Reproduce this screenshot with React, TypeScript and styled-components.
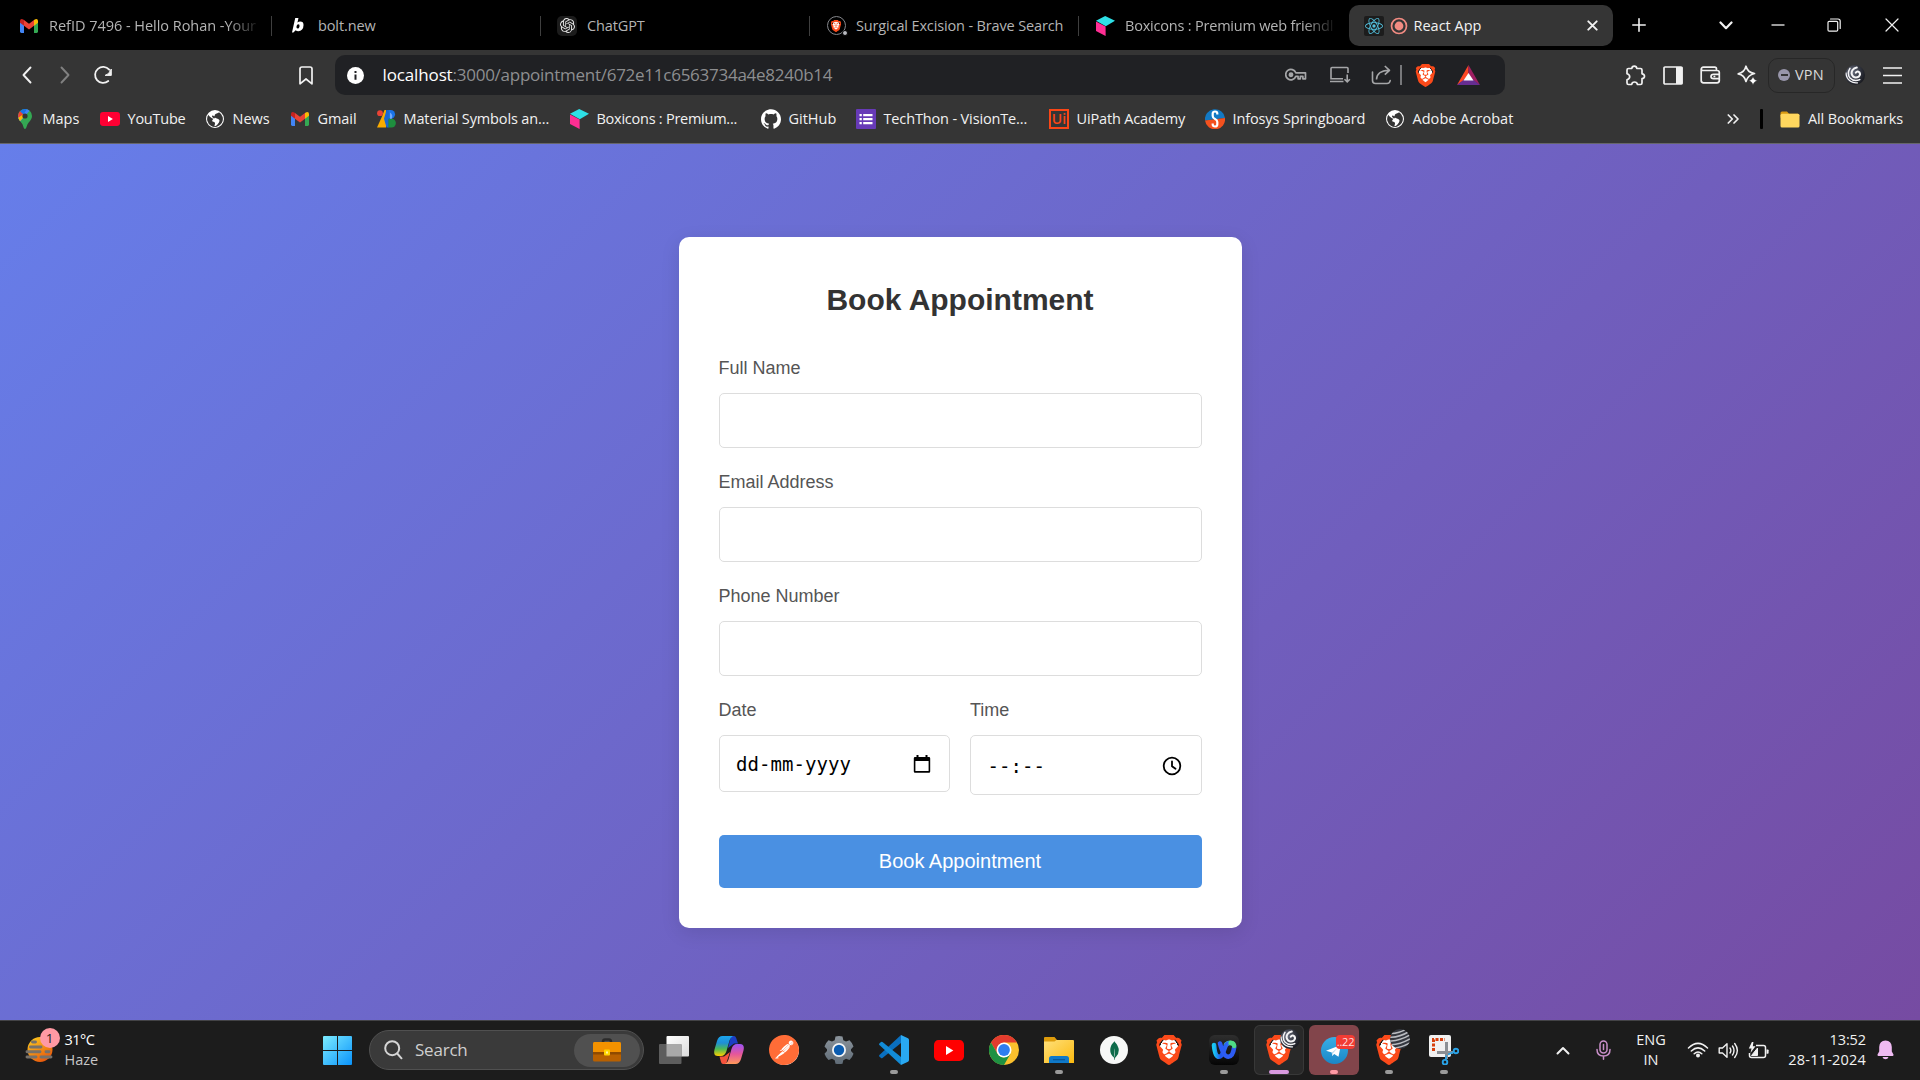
import React from "react";
import styled, { createGlobalStyle, css } from "styled-components";
import {
  SiBrave,
  SiPostman,
  SiOpenai,
  SiReact,
  SiGithub,
  SiMongodb,
} from "react-icons/si";
import { BsGlobeAmericas } from "react-icons/bs";

const ui = `"Open Sans", "Noto Sans", sans-serif`;
const arial = `"Liberation Sans", Arial, sans-serif`;

const GlobalStyle = createGlobalStyle`
  * { box-sizing: border-box; }
  html, body { margin: 0; padding: 0; background: #000; }
  body { width: 1920px; height: 1080px; overflow: hidden; font-family: ${ui}; }
  svg { display: block; flex: none; }
`;

/* ---------- shared ---------- */

const Desktop = styled.div`
  display: flex;
  flex-direction: column;
  width: 1920px;
  height: 1080px;
  overflow: hidden;
`;

const Text = styled.span<{ $ls?: number; $size?: number; $color?: string }>`
  font-family: ${ui};
  font-size: ${(p) => p.$size ?? 14.5}px;
  letter-spacing: ${(p) => p.$ls ?? 0}px;
  color: ${(p) => p.$color ?? "#f1f1f1"};
  line-height: 20px;
  white-space: nowrap;
`;

const Slot = styled.div<{ $w: number }>`
  display: flex;
  align-items: center;
  justify-content: center;
  flex: none;
  width: ${(p) => p.$w}px;
  height: 100%;
`;

const Spacer = styled.div<{ $w?: number }>`
  flex: ${(p) => (p.$w ? "none" : "1")};
  width: ${(p) => (p.$w ? `${p.$w}px` : "auto")};
`;

/* ---------- tab strip ---------- */

const TabStrip = styled.div`
  display: flex;
  align-items: center;
  flex: none;
  height: 50px;
  padding-left: 3px;
  background: #000;
`;

const Tab = styled.div`
  display: flex;
  align-items: center;
  flex: none;
  width: 269px;
  height: 50px;
  padding: 1px 0 0 16px;
`;

const ActiveTab = styled.div`
  display: flex;
  align-items: center;
  flex: none;
  width: 264px;
  height: 41px;
  margin: 1px 0 0 1px;
  padding: 0 15.5px 0 14.5px;
  border-radius: 10px;
  background: #353535;
`;

const ActiveLabel = styled.div`
  padding-bottom: 1.5px;
`;

const TabIcon = styled.div`
  display: flex;
  align-items: center;
  justify-content: center;
  flex: none;
  width: 20px;
  height: 20px;
`;

const TabLabel = styled.div<{ $fade?: boolean }>`
  flex: none;
  width: 209px;
  margin-left: 10px;
  padding-bottom: 2px;
  ${(p) =>
    p.$fade &&
    css`
      mask-image: linear-gradient(to right, #000 178px, transparent 212px);
    `}
`;

const TabDivider = styled.div`
  width: 1px;
  height: 20px;
  margin-left: auto;
  background: #3f3f3f;
`;

const DarkBadge = styled.div<{ $r: number }>`
  display: flex;
  align-items: center;
  justify-content: center;
  width: 20px;
  height: 20px;
  border-radius: ${(p) => p.$r}px;
  background: #1c1c1c;
`;

const SearchFavicon = styled.div`
  display: flex;
  align-items: center;
  justify-content: center;
  position: relative;
  width: 19px;
  height: 19px;
  border: 1.5px solid #85878c;
  border-radius: 50%;

  &::after {
    content: "";
    position: absolute;
    right: -3px;
    bottom: -2px;
    width: 4px;
    height: 4px;
    border: 1px solid #000;
    border-radius: 50%;
    box-sizing: content-box;
    background: #b9bac0;
  }
`;

/* ---------- toolbar ---------- */

const Toolbar = styled.div`
  display: flex;
  align-items: center;
  flex: none;
  height: 50px;
  padding: 0 10px 0 8px;
  background: #353535;
`;

const UrlBar = styled.div`
  display: flex;
  align-items: center;
  flex: none;
  width: 1170px;
  height: 40px;
  margin-left: 9px;
  padding: 0 15px 0 11.5px;
  border-radius: 10px;
  background: #202124;
`;

const UrlText = styled.div`
  display: flex;
  margin-left: 19px;
  padding-bottom: 1px;
`;

const UrlDivider = styled.div`
  width: 2px;
  height: 20px;
  margin: 0 1px 0 -1px;
  background: #77787b;
`;

const VpnButton = styled.div`
  display: flex;
  align-items: center;
  flex: none;
  width: 67px;
  height: 35px;
  padding-left: 9px;
  border: 1px solid #272727;
  border-radius: 10px;
  gap: 5px;
`;

const VpnDot = styled.div`
  display: flex;
  align-items: center;
  justify-content: center;
  width: 12px;
  height: 12px;
  border-radius: 50%;
  background: #9896aa;

  &::before {
    content: "";
    width: 7px;
    height: 1.6px;
    background: #353535;
  }
`;

/* ---------- bookmarks ---------- */

const BookmarksBar = styled.div`
  display: flex;
  align-items: center;
  flex: none;
  height: 44px;
  padding: 0 17px 5px 15px;
  border-bottom: 1px solid #66666a;
  background: #353535;
`;

const Bookmark = styled.div<{ $w?: number }>`
  display: flex;
  align-items: center;
  flex: none;
  gap: 7.5px;
  width: ${(p) => (p.$w ? `${p.$w}px` : "auto")};
`;

const BookmarkIcon = styled.div`
  display: flex;
  align-items: center;
  justify-content: center;
  flex: none;
  width: 20px;
  height: 20px;
`;

const BarDivider = styled.div`
  width: 3px;
  height: 20px;
  margin: 0 17px 0 20px;
  border-radius: 1px;
  background: #000;
`;

/* ---------- page ---------- */

const Page = styled.main`
  display: flex;
  align-items: center;
  justify-content: center;
  flex: 1;
  min-height: 0;
  padding-top: 1px;
  background: linear-gradient(135deg, #667eea 0%, #764ba2 100%);
`;

const Card = styled.form`
  display: flex;
  flex-direction: column;
  width: 563px;
  height: 691px;
  padding: 46px 40px 40px;
  border-radius: 10px;
  background: #fff;
  box-shadow: 0 5px 19px rgba(0, 0, 0, 0.1);
`;

const Title = styled.h2`
  flex: none;
  margin: 0 0 41px;
  color: #333;
  font: bold 30px/34px ${arial};
  text-align: center;
`;

const Field = styled.div`
  display: flex;
  flex: none;
  flex-direction: column;
  margin-bottom: 24px;
`;

const FieldRow = styled.div`
  display: grid;
  grid-template-columns: 1fr 1fr;
  align-items: start;
  gap: 20px;
  margin-bottom: 16px;
`;

const Label = styled.label`
  margin-bottom: 15px;
  color: #555;
  font: 18px/20px ${arial};
`;

const Input = styled.input`
  width: 100%;
  height: 55px;
  padding: 0 16px;
  border: 1px solid #ddd;
  border-radius: 5px;
  outline: none;
  background: #fff;
  font: 20px ${arial};
`;

const PickerBox = styled.div<{ $h: number }>`
  display: flex;
  align-items: center;
  justify-content: space-between;
  height: ${(p) => p.$h}px;
  padding: 1px 18.5px 0 16.5px;
  border: 1px solid #ddd;
  border-radius: 5px;
  color: #000;
  font: 19px/24px "DejaVu Sans Mono", monospace;
  letter-spacing: 0.05px;
`;

const Submit = styled.button`
  flex: none;
  width: 100%;
  height: 53px;
  padding: 0;
  border: 0;
  border-radius: 5px;
  background: #4a90e2;
  color: #fff;
  font: 20px ${arial};
`;

/* ---------- taskbar ---------- */

const Taskbar = styled.footer`
  display: flex;
  align-items: center;
  flex: none;
  height: 60px;
  padding-bottom: 1px;
  border-top: 1px solid #434346;
  background: #1c1c1c;
`;

const Weather = styled.div`
  display: flex;
  align-items: center;
  flex: none;
  width: 323px;
  padding-left: 24.5px;
`;

const WeatherIcon = styled.div`
  position: relative;
  width: 40px;
  height: 44px;
  padding-top: 9px;
`;

const WeatherBadge = styled.span`
  position: absolute;
  top: 0;
  left: 15px;
  width: 20px;
  height: 20px;
  border-radius: 50%;
  background: #ff99a4;
  color: #1c1c1c;
  font: 13.5px/20px ${ui};
  text-align: center;
`;

const Stack = styled.div<{ $align?: string }>`
  display: flex;
  flex-direction: column;
  align-items: ${(p) => p.$align ?? "flex-start"};
  padding-bottom: 1px;
`;

const SearchPill = styled.div`
  display: flex;
  align-items: center;
  justify-content: space-between;
  flex: none;
  width: 275px;
  height: 40px;
  margin: 0 5px 0 17px;
  padding: 0 3px 0 14px;
  border: 1px solid #505050;
  border-radius: 20px;
  background: #3a3a3a;
`;

const SearchPrompt = styled.div`
  display: flex;
  align-items: center;
  gap: 12px;
`;

const SearchHighlight = styled.div`
  display: flex;
  align-items: center;
  justify-content: center;
  width: 66px;
  height: 33px;
  border-radius: 17px;
  background: #505050;
`;

const Apps = styled.div`
  display: flex;
  gap: 5px;
`;

const AppTile = styled.div<{ $bg?: string; $outline?: boolean }>`
  display: flex;
  flex-direction: column;
  align-items: center;
  flex: none;
  position: relative;
  width: 50px;
  height: 50px;
  padding-top: 10px;
  border-radius: 6px;
  background: ${(p) => p.$bg ?? "transparent"};
  box-shadow: ${(p) => (p.$outline ? "inset 0 0 0 1px #383838" : "none")};
`;

const Indicator = styled.div<{ $w: number; $color: string }>`
  width: ${(p) => p.$w}px;
  height: 4px;
  margin-top: 5px;
  border-radius: 2px;
  background: ${(p) => p.$color};
`;

const ProfileBadge = styled.div`
  position: absolute;
  top: 4px;
  right: 4px;
`;

const CountBadge = styled.span`
  position: absolute;
  top: 10px;
  right: 4px;
  width: 19px;
  height: 14px;
  border-radius: 4px;
  background: #f23c34;
  color: #ffdede;
  font: 11px/14px ${ui};
  letter-spacing: -0.2px;
  text-align: center;
`;

const Lion = styled.div<{ $h: number }>`
  display: grid;
  place-items: center;
  flex: none;
  width: ${(p) => p.$h}px;
  height: ${(p) => p.$h}px;
  color: #fb4a1a;
  background: radial-gradient(ellipse 31% 38% at 50% 48%, #fff 97%, transparent);
`;

const Disc = styled.div<{ $size: number; $bg: string; $color: string }>`
  display: grid;
  place-items: center;
  place-content: center;
  width: ${(p) => p.$size}px;
  height: ${(p) => p.$size}px;
  border-radius: 50%;
  background: ${(p) => p.$bg};
  color: ${(p) => p.$color};
`;

const AppArt = styled.div`
  display: flex;
  align-items: center;
  justify-content: center;
  width: 30px;
  height: 30px;
`;

const Tray = styled.div`
  display: flex;
  align-items: center;
  height: 100%;
  margin-left: auto;
  padding-right: 16px;
`;

const Clock = styled.div`
  display: flex;
  flex-direction: column;
  align-items: flex-end;
  width: 93px;
  padding-bottom: 1px;
`;

/* ---------- drawings ---------- */

const Gmail = () => (
  <svg width="18" height="14" viewBox="0 0 18 14">
    <path d="M0 2v10.6Q0 14 1.300 14H4V6z" fill="#4285f4" />
    <path d="M18 2v10.600q0 1.400-1.300 1.400H14V6z" fill="#34a853" />
    <path d="M14 1v5.800l4-3V2q0-2-1.700-2-.9 0-1.500.5z" fill="#fbbc04" />
    <path d="M4 1v5.800l-4-3V2Q0 0 1.700 0q.9 0 1.500.5z" fill="#c5221f" />
    <path d="M4 6.800V1l5 3.800L14 1v5.800l-5 3.800z" fill="#ea4335" />
  </svg>
);

const Bolt = () => (
  <svg width="12" height="15" viewBox="0 0 13 16">
    <path
      fillRule="evenodd"
      d="M3.500 0H7L5.900 4.800Q7.300 3.800 8.900 3.800 12.500 3.800 12.500 7.500 12.500 10.500 10.900 12.400 9.300 14.300 6.900 14.300 5 14.300 4 13.100L1.500 15.500H0zM6.700 6.600Q5.400 6.600 4.900 8.700 4.400 11.300 6.200 11.300 7.500 11.300 8.100 9.300 8.700 6.600 6.700 6.600z"
      fill="#fff"
    />
  </svg>
);

const Boxicons = () => (
  <svg width="19" height="20" viewBox="0 0 19 20">
    <path d="M0 4.800 9.200 0 19 4.800 9.800 10.200z" fill="#2ee0e6" />
    <path d="M0 5.400 9.600 10.400V20L0 15z" fill="#ff2e93" />
  </svg>
);

const Record = () => (
  <svg width="18" height="18" viewBox="0 0 18 18">
    <circle cx="9" cy="9" r="7.500" fill="none" stroke="#f28b82" strokeWidth="1.700" />
    <circle cx="9" cy="9" r="4.400" fill="#f28b82" />
  </svg>
);

const Stroke = ({
  w,
  h,
  d,
  sw = 1.7,
  c = "#f1f1f1",
  fill = "none",
  round = true,
}: {
  w: number;
  h: number;
  d: string;
  sw?: number;
  c?: string;
  fill?: string;
  round?: boolean;
}) => (
  <svg
    width={w}
    height={h}
    viewBox={`0 0 ${w} ${h}`}
    fill={fill}
    stroke={c}
    strokeWidth={sw}
    strokeLinecap={round ? "round" : "butt"}
    strokeLinejoin="round"
  >
    <path d={d} />
  </svg>
);

const Reload = () => (
  <svg width="20" height="20" viewBox="0 0 20 20">
    <path d="M15.300 16A8 8 0 1 1 16.200 4.700" fill="none" stroke="#f1f1f1" strokeWidth="1.800" strokeLinecap="round" />
    <path d="M18.300 4v6.400h-6.200q3.800-.6 6.200-6.400z" fill="#f1f1f1" stroke="#f1f1f1" strokeLinejoin="round" />
  </svg>
);

const Info = () => (
  <svg width="17" height="17" viewBox="0 0 17 17">
    <circle cx="8.500" cy="8.500" r="8.500" fill="#fff" />
    <path d="M7.500 7.400h2v5.400h-2zM7.500 4h2v2h-2z" fill="#202124" />
  </svg>
);

const Key = () => (
  <svg width="22" height="14" viewBox="0 0 22 14" fill="none" stroke="#a5a6a8" strokeWidth="1.700">
    <path d="M10.800 4.800H20.500v6h-2.600V8.400h-2.600v2.400h-2.200V8.400H10.800A5.200 5.200 0 1 1 10.800 4.800z" strokeLinejoin="round" />
    <circle cx="6" cy="6.800" r="1.600" fill="#a5a6a8" />
  </svg>
);

const Install = () => (
  <svg width="22" height="18" viewBox="0 0 22 18" fill="none" stroke="#a5a6a8" strokeWidth="1.600">
    <path d="M19 7V2.600Q19 1.500 18 1.500H3Q2 1.500 2 2.600V12.800H14M1 15.500H14.500" />
    <path d="M18.200 8.500V15.800M15.500 13.200l2.700 2.700 2.700-2.700" />
  </svg>
);

const Share = () => (
  <svg width="21" height="20" viewBox="0 0 21 20" fill="none" stroke="#a5a6a8" strokeWidth="1.600" strokeLinejoin="round">
    <path d="M1.500 7V15.500q0 3 3 3H16q2.800 0 3.200-3" strokeLinecap="round" />
    <path d="M5.500 14.500Q5.800 5.800 18 5.300M13.800 1l4.700 4.300-4.700 4.400" />
  </svg>
);

const Triangle = () => (
  <svg width="23" height="20" viewBox="0 0 23 20">
    <path d="M11.500 0 0 20 11.500 12z" fill="#ff4724" />
    <path d="M11.500 0 23 20 11.500 12z" fill="#9e1f63" />
    <path d="M0 20H23L11.500 11z" fill="#662d91" />
    <path d="M11.500 8 16.500 15.500H6.500z" fill="#fff" />
  </svg>
);

const Puzzle = () => (
  <Stroke
    w={21}
    h={21}
    sw={1.7}
    d="M2 5Q2 3.500 3.500 3.500H6.800Q7 1.200 9.300 1.200T11.800 3.500H15.500Q17 3.500 17 5V8.800Q19.500 9 19.500 11.200T17 13.600V18Q17 19.500 15.500 19.500H12.500Q12 17 9.500 17T6.700 19.500H3.500Q2 19.500 2 18V14.800Q4.700 14 4.700 11.800T2 8.800z"
  />
);

const SidePanel = () => (
  <svg width="20" height="19" viewBox="0 0 20 19">
    <rect x="1" y="1" width="18" height="17" rx="1" fill="none" stroke="#f1f1f1" strokeWidth="1.700" />
    <rect x="13" y="1" width="6.500" height="17" fill="#f1f1f1" />
  </svg>
);

const Wallet = () => (
  <Stroke
    w={21}
    h={18}
    sw={1.7}
    d="M16.500 4.500V3Q16.500 1.200 14.700 1.200H3.500Q1.200 1.200 1.200 3.500V14.500Q1.200 16.800 3.500 16.800H17Q19.300 16.800 19.300 14.500V6.500Q19.300 4.500 17 4.500H3Q1.200 4.500 1.200 3M19.300 8.300H13.500Q11 8.300 11 10.500T13.500 12.700H19.300M14.200 10.500H14.600"
  />
);

const Sparkle = () => (
  <svg width="21" height="20" viewBox="0 0 21 20">
    <path
      d="M9 1.200Q10.300 7.200 17.500 8.500 10.800 10 9 16.500 7.500 10 1.200 8.800 7.500 7.200 9 1.200z"
      fill="none"
      stroke="#f1f1f1"
      strokeWidth="1.700"
      strokeLinejoin="round"
    />
    <path d="M16 11.500Q16.800 15 20.500 15.700 16.800 16.500 16 20 15.200 16.500 11.700 15.700 15.200 15 16 11.500z" fill="#fff" stroke="#353535" strokeWidth=".5" />
  </svg>
);

const Swirl = ({ size = 20 }: { size?: number }) => (
  <svg width={size} height={size} viewBox="0 0 20 20">
    <defs>
      <radialGradient id="swirlBall" cx=".35" cy=".35" r=".75">
        <stop offset="0" stopColor="#6b7080" />
        <stop offset=".6" stopColor="#2f323c" />
        <stop offset="1" stopColor="#15161b" />
      </radialGradient>
      <clipPath id="swirlClip">
        <circle cx="10" cy="10" r="10" />
      </clipPath>
    </defs>
    <circle cx="10" cy="10" r="10" fill="url(#swirlBall)" />
    <g fill="none" stroke="#f4f4f6" strokeLinecap="round" clipPath="url(#swirlClip)">
      <path d="M10.800 7.600Q12.400 5.600 14.300 7.200 16 9.400 13.800 11.600 10.600 13.500 8 11.400 5.500 8.600 7.400 5.300 9 3 11.800 2.600" strokeWidth="2" />
      <path d="M5 3.300Q1.600 8.500 5 13 9 17 14.800 14.600" strokeWidth="1.500" />
      <path d="M1 8Q1.300 13.500 5.500 16.300 8.500 18.300 12.500 17.800" strokeWidth="1.300" />
    </g>
  </svg>
);

const Striped = () => (
  <svg width="20" height="20" viewBox="0 0 20 20">
    <defs>
      <clipPath id="ball">
        <circle cx="10" cy="10" r="10" />
      </clipPath>
    </defs>
    <g clipPath="url(#ball)">
      <rect width="20" height="20" fill="#34373f" />
      <path
        d="M0 4.500Q9 5 20-2M0 8.200Q9 8.700 20 2M0 11.900Q9 12.400 20 6M0 15.600Q9 16.100 20 10M0 19.300Q9 19.800 20 14"
        stroke="#b9bbc0"
        strokeWidth="1.500"
        fill="none"
      />
    </g>
  </svg>
);

const MapsPin = () => (
  <svg width="14" height="20" viewBox="0 0 14 20">
    <defs>
      <clipPath id="pin">
        <path d="M7 0a7 7 0 0 1 7 7c0 3.500-2.500 5.200-4.300 8C8.600 17 8.300 20 7 20s-1.600-3-2.700-5C2.500 12.200 0 10.500 0 7a7 7 0 0 1 7-7z" />
      </clipPath>
    </defs>
    <g clipPath="url(#pin)">
      <rect width="14" height="20" fill="#34a853" />
      <path d="M0 15 14-1 10-3 0 6z" fill="#4285f4" />
      <path d="M0 14.500 7.500 6 5 4 0 9z" fill="#fbbc04" />
      <path d="M-1 9.500 5.800 5 2 1-1 4z" fill="#ea4335" />
      <path d="M2 2.200 5.500 5.500 9 0H4z" fill="#1a73e8" />
    </g>
    <circle cx="7" cy="7" r="2.600" fill="#353535" />
  </svg>
);

const YouTube = ({ w, h }: { w: number; h: number }) => (
  <svg width={w} height={h} viewBox="0 0 30 20" preserveAspectRatio="none">
    <rect width="30" height="20" rx="4.500" fill={w > 25 ? "#ff0000" : "#ff0033"} />
    <path d="M12 5.800v8.400l7.300-4.200z" fill="#fff" />
  </svg>
);

const MaterialSymbols = () => (
  <svg width="19" height="18" viewBox="0 0 19 18">
    <path d="M9 0v17.500H0L5 6.500 7.500 0z" fill="#f9ab00" />
    <circle cx="3" cy="3.200" r="2.900" fill="#ea4335" />
    <path d="M9.500 0h4.200a4.300 4.300 0 0 1 0 8.700H9.500z" fill="#1a73e8" />
    <path d="M9.500 0 7 8.700l2.500 8.800h2.300V0z" fill="#1967d2" />
    <path d="M11.500 8.700h3a4.400 4.400 0 0 1 0 8.800h-3z" fill="#1e8e3e" />
    <path d="M13 2.500q3.500 2.500 1.700 6.200H13z" fill="#6ea8ff" />
  </svg>
);

const Forms = () => (
  <svg width="20" height="20" viewBox="0 0 20 20">
    <rect width="20" height="20" rx="1" fill="#673ab7" />
    <path d="M3.500 5h2.300v2.200H3.500zM7.200 5h9.300v2.200H7.200zM3.500 9h2.300v2.200H3.500zM7.200 9h9.300v2.200H7.200zM3.500 13h2.300v2.200H3.500zM7.200 13h9.300v2.200H7.200z" fill="#fff" />
  </svg>
);

const UiPathMark = styled.div`
  width: 20px;
  height: 20px;
  border: 2px solid #fa4616;
  color: #fa4616;
  font: 600 14px/16px ${ui};
  text-align: center;
`;

const Infosys = () => (
  <svg width="20" height="20" viewBox="0 0 20 20">
    <path d="M0 11.500A10 10 0 1 1 20 9z" fill="#1279c4" />
    <path d="M0 11.500A10 10 0 0 0 20 9z" fill="#f4511e" />
    <path d="M12.300 5.500V4.500Q12.300 2.500 10 2.500T7.700 4.500V7Q7.700 9 10 10T12.300 13V15.500Q12.300 17.500 10 17.500T7.700 15.500V14.500" fill="none" stroke="#fff" strokeWidth="2.200" />
  </svg>
);

const Folder = () => (
  <svg width="20" height="17" viewBox="0 0 20 17">
    <path d="M.5 2Q.5.500 2 .5h5l2 2.300H18v4H.5z" fill="#d99a12" />
    <rect x=".5" y="2.700" width="19" height="13.800" rx="1.500" fill="#ffd75e" />
  </svg>
);

const Haze = () => (
  <svg width="29" height="26" viewBox="0 0 29 26">
    <defs>
      <linearGradient id="sun" x2=".6" y2="1">
        <stop offset="0" stopColor="#ffd21f" />
        <stop offset="1" stopColor="#e8590c" />
      </linearGradient>
    </defs>
    <circle cx="15" cy="12.500" r="12.500" fill="url(#sun)" />
    <path d="M7.500 5H10.500M5.500 10H16M2 14.800H15M21 14.800H24M2 20H11M16 20H26" stroke="#77716a" strokeWidth="2.900" strokeLinecap="round" />
  </svg>
);

const WindowsLogo = () => (
  <svg width="29" height="29" viewBox="0 0 29 29">
    <defs>
      <linearGradient id="win" x2="1" y2="1">
        <stop offset="0" stopColor="#7cecff" />
        <stop offset="1" stopColor="#0a93fb" />
      </linearGradient>
    </defs>
    <path d="M1 0H14V14H0V1Q0 0 1 0zM15 0H28Q29 0 29 1V14H15zM0 15H14V29H1Q0 29 0 28zM15 15H29V28Q29 29 28 29H15z" fill="url(#win)" />
  </svg>
);

const Briefcase = () => (
  <svg width="28" height="24" viewBox="0 0 28 24">
    <path d="M10 4Q10 1.500 12 1.500H16Q18 1.500 18 4" stroke="#2b2b2b" strokeWidth="2.600" fill="none" />
    <rect y="4" width="28" height="19.500" rx="1.500" fill="#b86000" />
    <path d="M0 5.500Q0 4 1.500 4H26.500Q28 4 28 5.500V14H0z" fill="#f39200" />
    <path d="M0 14H28V16.500H0z" fill="#8f4a00" />
    <rect x="11" y="11.500" width="6" height="6" rx="1" fill="#ffd400" />
    <rect x="13" y="13.500" width="2" height="2" fill="#fff3a0" />
  </svg>
);

const TaskView = () => (
  <svg width="30" height="28" viewBox="0 0 30 28">
    <defs>
      <linearGradient id="tv" x2="1" y2="1">
        <stop offset="0" stopColor="#fff" />
        <stop offset="1" stopColor="#dcdcdc" />
      </linearGradient>
    </defs>
    <rect x="7.500" y="0" width="22.500" height="20.500" rx="1" fill="url(#tv)" />
    <rect x="0" y="8" width="22.500" height="20" rx="1" fill="#5d5d5d" />
    <path d="M7.500 8H21.500Q22.500 8 22.500 9V20.500H7.500z" fill="#a9a9a9" />
  </svg>
);

const Copilot = () => (
  <svg width="30" height="28" viewBox="0 0 30 28">
    <defs>
      <linearGradient id="cpA" x2="0" y2="1">
        <stop offset="0" stopColor="#1ba6ee" />
        <stop offset=".35" stopColor="#1f8fd6" />
        <stop offset=".65" stopColor="#4dba54" />
        <stop offset="1" stopColor="#ffce00" />
      </linearGradient>
      <linearGradient id="cpB" x2="0" y2="1">
        <stop offset="0" stopColor="#9b52f5" />
        <stop offset=".5" stopColor="#e5569b" />
        <stop offset="1" stopColor="#ff9a5a" />
      </linearGradient>
    </defs>
    <path d="M17 0H20Q21.500 0 22.200 2L24 7.500H20L14 12z" fill="#1b3fc4" />
    <path d="M12 28H9Q7.500 28 7 26L5.500 20.500H10L16 16z" fill="#f5533d" />
    <path d="M8.500 0H19Q16.500 1 15.500 4.500L12.500 15Q11 20 7 20H4Q-1 20 .5 13.500L3 5Q4.500 0 8.500 0z" fill="url(#cpA)" />
    <path d="M21.500 28H11Q13.500 27 14.500 23.500L17.500 13Q19 8 23 8H26Q31 8 29.500 14.500L27 23Q25.500 28 21.500 28z" fill="url(#cpB)" />
  </svg>
);

const Gear = () => (
  <svg width="30" height="30" viewBox="0 0 30 30">
    <defs>
      <linearGradient id="gear" x2="0" y2="1">
        <stop offset="0" stopColor="#8b949c" />
        <stop offset="1" stopColor="#5f6b76" />
      </linearGradient>
    </defs>
    <path
      d="M11.500 1.500Q15 .5 18.500 1.500L19.300 5.200 22 6.500 25.500 5.200Q28.500 8 29.500 11.500L27 14.300V16L29.500 18.700Q28.500 22 25.500 25L22 23.800 19.300 25.200 18.500 28.700Q15 29.500 11.500 28.700L10.700 25.200 8 23.800 4.500 25Q1.500 22 .5 18.700L3 16V14.300L.5 11.500Q1.500 8 4.500 5.200L8 6.500 10.700 5.200z"
      fill="url(#gear)"
    />
    <circle cx="15" cy="15" r="7" fill="#f2f4f6" />
    <circle cx="15" cy="15" r="5.200" fill="#0a5cb0" />
  </svg>
);

const VSCode = () => (
  <svg width="30" height="30" viewBox="0 0 30 30">
    <path d="M22 0 29 3.300Q30 3.800 30 5V25Q30 26.200 29 26.700L22 30z" fill="#29a9f2" />
    <path d="M22 0V8L3.500 23Q2.800 23.500 2 23L.4 21.500Q-.3 20.800.4 20z" fill="#0a6fbf" />
    <path d="M22 30V22L3.500 7Q2.800 6.500 2 7L.4 8.500Q-.3 9.200.4 10z" fill="#128bd6" />
  </svg>
);

const Chrome = () => (
  <svg width="30" height="30" viewBox="0 0 30 30">
    <circle cx="15" cy="15" r="15" fill="#fbc02d" />
    <path d="M2 7.500A15 15 0 0 1 28 7.500H15Q10 8 8.500 18.750z" fill="#e33b2e" />
    <path d="M2 7.500 8.500 18.750Q11 22.500 15 22.500L21.500 18.750 15 30A15 15 0 0 1 2 7.500z" fill="#1e9142" />
    <circle cx="15" cy="15" r="7.500" fill="#fff" />
    <circle cx="15" cy="15" r="5.900" fill="#2f7df0" />
  </svg>
);

const Explorer = () => (
  <svg width="30" height="28" viewBox="0 0 30 28">
    <defs>
      <linearGradient id="fold" x2="1" y2="1">
        <stop offset="0" stopColor="#ffe07a" />
        <stop offset="1" stopColor="#fbb90f" />
      </linearGradient>
    </defs>
    <path d="M0 2Q0 1 1 1H10.500L13 4H28V10H0z" fill="#dd9b0b" />
    <path d="M0 5.500H10.500L12.500 4H29Q30 4 30 5V27H0z" fill="url(#fold)" />
    <path d="M5 27V22.500Q5 20 7.500 20H22.500Q25 20 25 22.500V27z" fill="#0f79c9" />
    <path d="M9 23.700H21" stroke="#0a5596" strokeWidth="1.200" />
  </svg>
);

const Webex = () => (
  <svg width="30" height="30" viewBox="0 0 30 30">
    <defs>
      <linearGradient id="wx" x2="1">
        <stop offset="0" stopColor="#19c7f2" />
        <stop offset=".45" stopColor="#2156f0" />
        <stop offset="1" stopColor="#2f6bf5" />
      </linearGradient>
      <linearGradient id="wxBg" x2="0" y2="1">
        <stop offset="0" stopColor="#2e2e2e" />
        <stop offset="1" stopColor="#050505" />
      </linearGradient>
    </defs>
    <rect width="30" height="30" rx="6" fill="url(#wxBg)" />
    <path d="M17 9.500Q20.500 6.500 24 8.500" fill="none" stroke="#4fdc84" strokeWidth="4.500" strokeLinecap="round" />
    <path
      d="M5 10Q6 21.800 10 21.800 12.800 21.800 15 15 17.200 8.200 19.800 8.200"
      fill="none"
      stroke="url(#wx)"
      strokeWidth="4.600"
      strokeLinecap="round"
    />
    <path
      d="M11 8.500Q14.500 21.800 19.300 21.800 24 21.500 25.200 12"
      fill="none"
      stroke="#2d5cf3"
      strokeWidth="4.600"
      strokeLinecap="round"
    />
    <path d="M21.500 8Q25 8.500 25.200 11" fill="none" stroke="#4fdc84" strokeWidth="4.400" strokeLinecap="round" />
  </svg>
);

const Telegram = () => (
  <svg width="27" height="27" viewBox="0 0 27 27">
    <defs>
      <linearGradient id="tg" x2="0" y2="1">
        <stop offset="0" stopColor="#38aee6" />
        <stop offset="1" stopColor="#1a86c7" />
      </linearGradient>
    </defs>
    <circle cx="13.500" cy="13.500" r="13.500" fill="url(#tg)" />
    <path d="M5 13.800 19.800 8 17.500 19.800 13.200 17 11.200 19 10.800 15.600z" fill="#fff" />
    <path d="M10.800 15.600 17 10.500 12 16.300 11.200 19z" fill="#b9d9ec" />
  </svg>
);

const Snip = () => (
  <svg width="30" height="30" viewBox="0 0 30 30">
    <rect width="22" height="22" rx="2" fill="#f1f1f1" />
    <path d="M4.500 16V4.500H16" fill="none" stroke="#d8400d" strokeWidth="3" strokeDasharray="3 1.500" />
    <path d="M17.500 7V24M8 17.500H24" fill="none" stroke="#8b8f94" strokeWidth="3" />
    <circle cx="27" cy="16" r="2.300" fill="none" stroke="#29a3e8" strokeWidth="1.900" />
    <circle cx="16" cy="27.200" r="2.300" fill="none" stroke="#29a3e8" strokeWidth="1.900" />
    <path d="M19 19.500 25 17M17.300 20.500 16.700 25" stroke="#29a3e8" strokeWidth="1.700" />
  </svg>
);

const Magnifier = () => (
  <svg width="19" height="20" viewBox="0 0 19 20" fill="none" stroke="#d6d6d6" strokeWidth="2" strokeLinecap="round">
    <circle cx="8.200" cy="8.200" r="7" />
    <path d="M13.200 13.500 17.500 18.300" />
  </svg>
);

const Wifi = () => (
  <svg width="22" height="16" viewBox="0 0 22 16" fill="none" stroke="#f1f1f1" strokeWidth="1.500" strokeLinecap="round">
    <path d="M1.500 6Q11-3.300 20.500 6M4.300 9Q11 2.700 17.700 9M7.200 11.800Q11 8.200 14.800 11.800" />
    <circle cx="11" cy="13.600" r="2" fill="#f1f1f1" stroke="none" />
  </svg>
);

const Speaker = () => (
  <Stroke
    w={21}
    h={17}
    sw={1.4}
    d="M1.200 6V11H4.500L9 15.200V1.800L4.500 6zM12 6Q13.700 8.500 12 11M14.500 4Q17.500 8.500 14.500 13M16.700 1.500Q22 8.500 16.700 15.500"
  />
);

const Battery = () => (
  <svg width="21" height="17" viewBox="0 0 21 17">
    <path d="M8 3.500H15.500Q17.500 3.500 17.500 5.500V13.500Q17.500 15.500 15.500 15.500H3.500Q1.500 15.500 1.500 13.500V11" fill="none" stroke="#f1f1f1" strokeWidth="1.500" />
    <path d="M18.500 7.500h1.300q.8 0 .8.800v2.600q0 .8-.8.800H18.500z" fill="#f1f1f1" />
    <path d="M3.500 13.500 9.500 6V13.500z" fill="#f1f1f1" stroke="#f1f1f1" />
    <path d="M4-.2.8 6.500H3.500L2.500 11 7.500 4.300H4.800L5.500-.2z" fill="#f1f1f1" />
  </svg>
);

const Mic = () => (
  <svg width="15" height="20" viewBox="0 0 15 20" fill="none" stroke="#c98fc9" strokeWidth="1.500" strokeLinecap="round">
    <rect x="4" y="1" width="7" height="12" rx="3.500" />
    <path d="M1 9.500Q1 16 7.500 16T14 9.500M7.500 16V19.200M7.500 4.500V9.500" />
  </svg>
);

const Bell = () => (
  <svg width="17" height="20" viewBox="0 0 17 20">
    <path d="M8.500.5Q14.500.8 14.800 7V11.500L16.500 14.500Q16.600 16 15.500 16H1.500Q.4 16 .5 14.500L2.200 11.500V7Q2.500.8 8.500.5z" fill="#efbaf2" />
    <path d="M5.500 17H11.500Q10.800 19.300 8.500 19.300T5.500 17z" fill="#efbaf2" />
  </svg>
);

const BraveLogo = ({ size }: { size: number }) => (
  <Lion $h={size}>
    <SiBrave size={size} />
  </Lion>
);

/* ---------- data ---------- */

const tabs = [
  { label: "RefID 7496 - Hello Rohan -Your", ls: -0.03, fade: true, icon: <Gmail /> },
  { label: "bolt.new", ls: -0.12, icon: <Bolt /> },
  {
    label: "ChatGPT",
    ls: -0.12,
    icon: (
      <DarkBadge $r={5}>
        <SiOpenai size={15} color="#e6e6e6" />
      </DarkBadge>
    ),
  },
  {
    label: "Surgical Excision - Brave Search",
    ls: -0.14,
    icon: (
      <SearchFavicon>
        <BraveLogo size={12} />
      </SearchFavicon>
    ),
  },
  { label: "Boxicons : Premium web friendl", ls: -0.2, fade: true, last: true, icon: <Boxicons /> },
];

const bookmarks = [
  { label: "Maps", w: 85, ls: 0, icon: <MapsPin /> },
  { label: "YouTube", w: 105, ls: -0.23, icon: <YouTube w={20} h={14} /> },
  { label: "News", w: 85, ls: 0, icon: <BsGlobeAmericas size={18} color="#fff" /> },
  { label: "Gmail", w: 86, ls: -0.07, icon: <Gmail /> },
  { label: "Material Symbols an...", w: 193, ls: -0.13, icon: <MaterialSymbols /> },
  { label: "Boxicons : Premium...", w: 192, ls: -0.25, icon: <Boxicons /> },
  { label: "GitHub", w: 95, ls: 0, icon: <SiGithub size={20} color="#fff" /> },
  { label: "TechThon - VisionTe...", w: 193, ls: -0.14, icon: <Forms /> },
  { label: "UiPath Academy", w: 156, ls: -0.15, icon: <UiPathMark>Ui</UiPathMark> },
  { label: "Infosys Springboard", w: 180, ls: -0.12, icon: <Infosys /> },
  { label: "Adobe Acrobat", w: 130, ls: 0.04, icon: <BsGlobeAmericas size={18} color="#fff" /> },
];

type App = {
  name: string;
  art: React.ReactNode;
  badge?: React.ReactNode;
  bg?: string;
  outline?: boolean;
  mark?: { w: number; color: string };
};

const running = { w: 8, color: "#9a9a9a" };

const apps: App[] = [
  { name: "task-view", art: <TaskView /> },
  { name: "copilot", art: <Copilot /> },
  {
    name: "postman",
    art: (
      <Disc $size={29} $bg="#fff" $color="#ff6c37">
        <SiPostman size={30} />
      </Disc>
    ),
  },
  { name: "settings", art: <Gear /> },
  { name: "vscode", art: <VSCode />, mark: running },
  { name: "youtube", art: <YouTube w={30} h={21} /> },
  { name: "chrome", art: <Chrome /> },
  { name: "explorer", art: <Explorer />, mark: running },
  {
    name: "mongodb",
    art: (
      <Disc $size={28} $bg="#f7f8f7" $color="#0d6b4a">
        <SiMongodb size={19} />
      </Disc>
    ),
  },
  { name: "brave", art: <BraveLogo size={30} /> },
  { name: "webex", art: <Webex />, mark: running },
  {
    name: "brave-profile-1",
    art: <BraveLogo size={30} />,
    badge: (
      <ProfileBadge>
        <Swirl size={20} />
      </ProfileBadge>
    ),
    bg: "#292929",
    outline: true,
    mark: { w: 20, color: "#d99ae0" },
  },
  {
    name: "telegram",
    art: <Telegram />,
    badge: <CountBadge>..22</CountBadge>,
    bg: "#82454b",
    mark: { w: 8, color: "#ff99a4" },
  },
  {
    name: "brave-profile-2",
    art: <BraveLogo size={30} />,
    badge: (
      <ProfileBadge>
        <Striped />
      </ProfileBadge>
    ),
    mark: running,
  },
  { name: "snipping-tool", art: <Snip />, mark: running },
];

const textFields = ["Full Name", "Email Address", "Phone Number"];

/* ---------- app ---------- */

export default function App() {
  return (
    <Desktop>
      <GlobalStyle />

      <TabStrip>
        {tabs.map((t) => (
          <Tab key={t.label}>
            <TabIcon>{t.icon}</TabIcon>
            <TabLabel $fade={t.fade}>
              <Text $ls={t.ls} $color="#b4b4b4">
                {t.label}
              </Text>
            </TabLabel>
            {!t.last && <TabDivider />}
          </Tab>
        ))}
        <ActiveTab>
          <DarkBadge $r={2}>
            <SiReact size={18} color="#53c1de" />
          </DarkBadge>
          <Spacer $w={6} />
          <Record />
          <Spacer $w={6} />
          <ActiveLabel>
            <Text>React App</Text>
          </ActiveLabel>
          <Spacer />
          <Stroke w={11} h={11} sw={1.9} d="M1.300 1.300 9.700 9.700M9.700 1.300 1.300 9.700" />
        </ActiveTab>
        <Slot $w={51}>
          <Stroke w={14} h={14} sw={1.6} d="M7 .8V13.200M.8 7H13.200" />
        </Slot>
        <Spacer />
        <Slot $w={50}>
          <Stroke w={14} h={9} sw={2.2} d="M1.500 1.500 7 7.200 12.500 1.500" />
        </Slot>
        <Slot $w={54}>
          <Stroke w={14} h={2} sw={1.3} round={false} d="M.5 1H13.500" />
        </Slot>
        <Slot $w={58}>
          <Stroke w={14} h={14} sw={1.2} d="M1 4.500Q1 3.300 2.200 3.300H9.500Q10.700 3.300 10.700 4.500V12Q10.700 13.200 9.500 13.200H2.200Q1 13.200 1 12zM3.500 1H11Q13.200 1 13.200 3.200V10.500" />
        </Slot>
        <Slot $w={57}>
          <Stroke w={14} h={14} sw={1.2} d="M1 1 13 13M13 1 1 13" />
        </Slot>
      </TabStrip>

      <Toolbar>
        <Slot $w={38}>
          <Stroke w={10} h={18} sw={1.9} d="M8.500 1.500 1.500 9 8.500 16.500" />
        </Slot>
        <Slot $w={37}>
          <Stroke w={10} h={18} sw={1.9} c="#818181" d="M1.500 1.500 8.500 9 1.500 16.500" />
        </Slot>
        <Slot $w={39}>
          <Reload />
        </Slot>
        <Spacer $w={164} />
        <Slot $w={40}>
          <Stroke w={14} h={19} sw={1.7} d="M1 3Q1 1 3 1H11Q13 1 13 3V17.800L7 13 1 17.800z" />
        </Slot>
        <UrlBar>
          <Info />
          <UrlText>
            <Text $size={17} $ls={-0.13} $color="#fff">
              localhost
            </Text>
            <Text $size={17} $ls={-0.26} $color="#8d8e90">
              :3000/appointment/672e11c6563734a4e8240b14
            </Text>
          </UrlText>
          <Spacer />
          <Slot $w={44}>
            <Key />
          </Slot>
          <Slot $w={43}>
            <Install />
          </Slot>
          <Slot $w={40}>
            <Share />
          </Slot>
          <UrlDivider />
          <Slot $w={44}>
            <BraveLogo size={23} />
          </Slot>
          <Slot $w={43}>
            <Triangle />
          </Slot>
        </UrlBar>
        <Spacer />
        <Slot $w={37.5}>
          <Puzzle />
        </Slot>
        <Slot $w={37.5}>
          <SidePanel />
        </Slot>
        <Slot $w={37.5}>
          <Wallet />
        </Slot>
        <Slot $w={37.5}>
          <Sparkle />
        </Slot>
        <Spacer $w={1.75} />
        <VpnButton>
          <VpnDot />
          <Text $ls={0.2} $color="#dadada">
            VPN
          </Text>
        </VpnButton>
        <Slot $w={40}>
          <Swirl />
        </Slot>
        <Slot $w={35}>
          <Stroke w={19} h={17} sw={1.7} round={false} d="M0 1H19M0 8.500H19M0 16H19" />
        </Slot>
      </Toolbar>

      <BookmarksBar>
        {bookmarks.map((b) => (
          <Bookmark key={b.label} $w={b.w}>
            <BookmarkIcon>{b.icon}</BookmarkIcon>
            <Text $ls={b.ls}>{b.label}</Text>
          </Bookmark>
        ))}
        <Spacer />
        <Stroke w={13} h={10} sw={1.7} d="M1.300 1 5.300 5 1.300 9M7 1 11 5 7 9" />
        <BarDivider />
        <Bookmark>
          <BookmarkIcon>
            <Folder />
          </BookmarkIcon>
          <Text $ls={-0.12}>All Bookmarks</Text>
        </Bookmark>
      </BookmarksBar>

      <Page>
        <Card>
          <Title>Book Appointment</Title>
          {textFields.map((name) => (
            <Field key={name}>
              <Label>{name}</Label>
              <Input type="text" />
            </Field>
          ))}
          <FieldRow>
            <Field>
              <Label>Date</Label>
              <PickerBox $h={57}>
                dd-mm-yyyy
                <svg width="18" height="18" viewBox="0 0 18 18">
                  <path d="M3.500 0h2v2h7V0h2v2H16q1.200 0 1.200 1.200V16.500q0 1.200-1.200 1.200H2Q.8 17.700.8 16.500V3.200Q.8 2 2 2H3.500zM2.400 6v10.100H15.600V6z" fill="#000" fillRule="evenodd" />
                </svg>
              </PickerBox>
            </Field>
            <Field>
              <Label>Time</Label>
              <PickerBox $h={60}>
                --:--
                <Stroke w={20} h={20} sw={1.8} c="#000" d="M10 1.700A8.300 8.300 0 1 0 10 18.300 8.300 8.300 0 1 0 10 1.700M10 5.500V10.200L13.500 12.800" />
              </PickerBox>
            </Field>
          </FieldRow>
          <Submit type="button">Book Appointment</Submit>
        </Card>
      </Page>

      <Taskbar>
        <Weather>
          <WeatherIcon>
            <Haze />
            <WeatherBadge>1</WeatherBadge>
          </WeatherIcon>
          <Stack>
            <Text $ls={-0.48} $color="#fff">
              31°C
            </Text>
            <Text $color="#c6c6c6">Haze</Text>
          </Stack>
        </Weather>
        <WindowsLogo />
        <SearchPill>
          <SearchPrompt>
            <Magnifier />
            <Text $size={17} $ls={-0.22} $color="#cfcfcf">
              Search
            </Text>
          </SearchPrompt>
          <SearchHighlight>
            <Briefcase />
          </SearchHighlight>
        </SearchPill>
        <Apps>
          {apps.map((a) => (
            <AppTile key={a.name} $bg={a.bg} $outline={a.outline}>
              <AppArt>{a.art}</AppArt>
              {a.mark && <Indicator $w={a.mark.w} $color={a.mark.color} />}
              {a.badge}
            </AppTile>
          ))}
        </Apps>
        <Tray>
          <Slot $w={40}>
            <Stroke w={14} h={9} sw={2} d="M1.500 7.500 7 2 12.500 7.500" />
          </Slot>
          <Slot $w={40}>
            <Mic />
          </Slot>
          <Slot $w={56}>
            <Stack $align="center">
              <Text $ls={0.05}>ENG</Text>
              <Text>IN</Text>
            </Stack>
          </Slot>
          <Spacer $w={4} />
          <Slot $w={30}>
            <Wifi />
          </Slot>
          <Slot $w={30}>
            <Speaker />
          </Slot>
          <Slot $w={30}>
            <Battery />
          </Slot>
          <Clock>
            <Text $ls={-0.1}>13:52</Text>
            <Text $ls={0.2}>28-11-2024</Text>
          </Clock>
          <Slot $w={38}>
            <Bell />
          </Slot>
        </Tray>
      </Taskbar>
    </Desktop>
  );
}
